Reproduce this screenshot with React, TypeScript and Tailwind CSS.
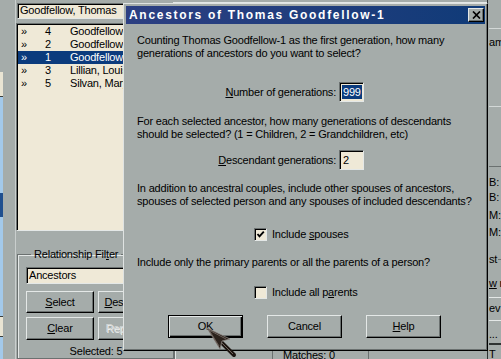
import React from "react";

const ROWS = [
  { n: "4", name: "Goodfellow, Thomas Sr.", selected: false },
  { n: "2", name: "Goodfellow, Samuel", selected: false },
  { n: "1", name: "Goodfellow, Thomas", selected: true },
  { n: "3", name: "Lillian, Louisa", selected: false },
  { n: "5", name: "Silvan, Mary", selected: false },
];

// classic 3d borders
const raised =
  "border border-t-[#e4e8e7] border-l-[#e4e8e7] border-r-black border-b-black shadow-[inset_-1px_-1px_0_#6b7170]";
const sunken =
  "border border-t-[#6b7170] border-l-[#6b7170] border-r-[#e4e8e7] border-b-[#e4e8e7] shadow-[inset_1px_1px_0_#000]";

function U({ children }: { children: React.ReactNode }) {
  return <span className="underline underline-offset-[1px] decoration-1">{children}</span>;
}

function Button({ children, w, isDefault, disabled }: { children: React.ReactNode; w: string; isDefault?: boolean; disabled?: boolean }) {
  const frame = isDefault
    ? "border border-black shadow-[inset_1px_1px_0_#e4e8e7,inset_-1px_-1px_0_#000,inset_-2px_-2px_0_#6b7170]"
    : raised;
  return (
    <div
      className={`${w} h-full shrink-0 flex items-center justify-center whitespace-nowrap overflow-hidden ${frame} ${
        disabled ? "text-[#d3d7d6] [text-shadow:1px_1px_0_#eef0ef]" : "text-black"
      }`}
    >
      {children}
    </div>
  );
}

function Checkbox({ checked }: { checked?: boolean }) {
  return (
    <div className={`w-[13px] h-[13px] bg-[#efe9d7] ${sunken} flex items-center justify-center shrink-0`}>
      {checked && (
        <svg width="9" height="9" viewBox="0 0 9 9">
          <path d="M1.5 4 L3.5 6.3 L7.8 1.6" stroke="#000" strokeWidth="1.9" fill="none" />
        </svg>
      )}
    </div>
  );
}

function Dialog() {
  return (
    <div className="absolute left-[123px] top-[3px] w-[365px] h-[348px] bg-[#a5acaa] border border-t-[#dfe3e2] border-l-[#dfe3e2] border-r-black border-b-black shadow-[inset_-1px_-1px_0_#6b7170] p-[2px] flex flex-col">
      <div className="h-[18px] shrink-0 flex items-center justify-between pl-[3px] pr-[1px] bg-gradient-to-r from-[#2c3f82] to-[#0f3b78]">
        <span className="text-white font-bold text-[12px] tracking-[1.7px] font-['Liberation_Sans',sans-serif]">
          Ancestors of Thomas Goodfellow-1
        </span>
        <div className={`w-[16px] h-[14px] bg-[#a5acaa] ${raised} flex items-center justify-center`}>
          <svg width="9" height="8" viewBox="0 0 9 8">
            <path d="M1 0.5 L8 7.5 M8 0.5 L1 7.5" stroke="#000" strokeWidth="1.7" />
          </svg>
        </div>
      </div>

      <div className="flex flex-col pl-[11px] leading-[13px]">
        <div className="mt-[10px] whitespace-nowrap">
          <div>Counting Thomas Goodfellow-1 as the first generation, how many</div>
          <div>generations of ancestors do you want to select?</div>
        </div>

        <div className="mt-[22px] h-[20px] flex items-center justify-end gap-[3px] pr-[121px]">
          <span>
            <U>N</U>umber of generations:
          </span>
          <div className={`w-[25px] h-[20px] shrink-0 bg-[#efe9d7] ${sunken} flex items-center pl-[2px]`}>
            <span className="bg-[#0b3b7d] text-white px-px leading-[14px]">999</span>
          </div>
        </div>

        <div className="mt-[13px] whitespace-nowrap">
          <div>For each selected ancestor, how many generations of descendants</div>
          <div>should be selected? (1 = Children, 2 = Grandchildren, etc)</div>
        </div>

        <div className="mt-[9px] h-[20px] flex items-center justify-end gap-[3px] pr-[121px]">
          <span>
            <U>D</U>escendant generations:
          </span>
          <div className={`w-[25px] h-[20px] shrink-0 bg-[#efe9d7] ${sunken} flex items-center pl-[3px]`}>2</div>
        </div>

        <div className="mt-[12px] whitespace-nowrap">
          <div>In addition to ancestral couples, include other spouses of ancestors,</div>
          <div>spouses of selected person and any spouses of included descendants?</div>
        </div>

        <div className="mt-[20px] ml-[117px] h-[13px] flex items-center gap-[5px]">
          <Checkbox checked />
          <span>
            Include <U>s</U>pouses
          </span>
        </div>

        <div className="mt-[15px] whitespace-nowrap">Include only the primary parents or all the parents of a person?</div>

        <div className="mt-[17px] ml-[117px] h-[13px] flex items-center gap-[5px]">
          <Checkbox />
          <span>
            Include all p<U>a</U>rents
          </span>
        </div>

        <div className="mt-[16px] ml-[31px] h-[23px] flex gap-[24px]">
          <Button w="w-[75px]" isDefault>
            OK
          </Button>
          <Button w="w-[75px]">Cancel</Button>
          <Button w="w-[75px]">
            <U>H</U>elp
          </Button>
        </div>
      </div>
    </div>
  );
}

function Cursor() {
  return (
    <svg className="absolute left-[206px] top-[327px]" width="32" height="32" viewBox="0 0 32 32">
      <path d="M15 15 L28 28" stroke="#1b1410" strokeWidth="4" strokeLinecap="round" />
      <path d="M16 16 L27 27" stroke="#6e625a" strokeWidth="1" />
      <polygon points="1,1 24,12 16,14 14,22" fill="#2b221c" stroke="#8d8580" strokeWidth="0.8" />
      <path d="M3 3 L20 12 M3 3 L13 19" stroke="#7b706a" strokeWidth="0.8" />
    </svg>
  );
}

export default function App() {
  return (
    <div className="relative w-[501px] h-[359px] overflow-hidden bg-[#a5acaa] text-black text-[11px] leading-[13px] tracking-[-0.2px] font-['Liberation_Sans',Arial,sans-serif] flex">
      {/* far left strip */}
      <div className="w-[3px] h-full flex flex-col shrink-0">
        <div className="h-[72px]" />
        <div className="h-[25px] bg-[#e9e4d3] border-b border-[#3a3f3e]" />
        <div className="h-[96px] bg-[#a3c9ea]" />
        <div className="h-[24px] bg-[#1f4f8f]" />
        <div className="h-[99px] bg-[#a3c9ea]" />
        <div className="h-[21px] bg-[#e9e4d3] border-y border-[#3a3f3e]" />
        <div className="flex-1 bg-[#a3c9ea]" />
      </div>
      <div className="w-[13px] h-full shrink-0 border-r border-[#c9cecd]" />

      {/* left panel */}
      <div className="w-[157px] h-full shrink-0 flex flex-col pt-[3px]">
        <div className={`h-[16px] ml-px bg-[#efe9d7] ${sunken} flex items-center pl-[2px] whitespace-nowrap overflow-hidden`}>
          Goodfellow, Thomas
        </div>
        <div className={`mt-[4px] h-[214px] bg-[#efe9d7] ${sunken} pt-px px-px overflow-hidden`}>
          {ROWS.map((r) => (
            <div
              key={r.n}
              className={`h-[13px] flex items-center whitespace-nowrap ${r.selected ? "bg-[#0b3b7d] text-white" : ""}`}
            >
              <span className="w-[27px] shrink-0 pl-[3px]">»</span>
              <span className="w-[25px] shrink-0">{r.n}</span>
              <span className="shrink-0">{r.name}</span>
            </div>
          ))}
        </div>
        <fieldset className="mt-[17px] ml-px flex-1 border border-[#6b7170] shadow-[inset_1px_1px_0_#e4e8e7,1px_1px_0_#e4e8e7] px-[8px]">
          <legend className="ml-[5px] px-[3px] leading-[13px]">
            Relationship Fil<U>t</U>er
          </legend>
          <div className={`mt-[6px] h-[17px] bg-[#efe9d7] ${sunken} flex items-center pl-[2px]`}>Ancestors</div>
          <div className="mt-[7px] h-[22px] flex gap-[4px]">
            <Button w="w-[68px]">
              <U>S</U>elect
            </Button>
            <Button w="w-[68px]">
              <U>D</U>eselect All
            </Button>
          </div>
          <div className="mt-[4px] h-[23px] flex gap-[4px]">
            <Button w="w-[68px]">
              <U>C</U>lear
            </Button>
            <Button w="w-[68px]" disabled>
              Replace All
            </Button>
          </div>
          <div className="mt-[5px] text-center">Selected: 5</div>
        </fieldset>
      </div>

      {/* center area, mostly covered by the dialog */}
      <div className="flex-1 h-full flex flex-col justify-between border-r border-[#2f3332]">
        <div className="-mt-[10px] h-[13px] flex border-b border-[#e4e8e7] whitespace-nowrap">
          <span className="ml-[140px]">Sex M</span>
          <span className="ml-[50px]">AFN</span>
        </div>
        <div className="h-[11px] flex border-t border-[#e4e8e7] whitespace-nowrap">
          <div className="w-[99px] border-l border-[#6b7170]" />
          <div className="w-[96px] border-l border-[#6b7170] pl-[10px] leading-[13px]">Matches: 0</div>
          <div className="flex-1 border-l border-[#6b7170]" />
        </div>
      </div>

      {/* right edge fragments */}
      <div className="w-[13px] h-full shrink-0 flex flex-col whitespace-nowrap overflow-hidden pl-px">
        <div className="h-[28px] shrink-0" />
        <div className="h-[78px] shrink-0 border-t border-[#d3d8d7] pt-[7px]">am</div>
        <div className="h-[60px] shrink-0 border-t border-[#d3d8d7]" />
        <div className="shrink-0 border-t border-[#6b7170] pt-[9px]">
          <div className="h-[15px]">B:</div>
          <div className="h-[18px]">B:</div>
          <div className="h-[17px]">M:</div>
          <div className="h-[15px]">M:</div>
        </div>
        <div className="h-[34px] shrink-0 pt-[12px] flex items-start">
          <span>st</span>
          <span className="mt-[6px] ml-px h-px w-[6px] bg-[#6b7170]" />
        </div>
        <div className="h-[22px] shrink-0 pt-[2px]">
          <U>w</U> r
        </div>
        <div className="h-[23px] shrink-0 border-t border-[#e4e8e7] pt-[4px]">ev</div>
        <div className="h-[23px] shrink-0 border-t border-[#e4e8e7] pt-[7px]">...</div>
        <div className="flex-1 border-t-2 border-[#2f3332] pt-[3px]">T</div>
      </div>

      <Dialog />
      <Cursor />
    </div>
  );
}
